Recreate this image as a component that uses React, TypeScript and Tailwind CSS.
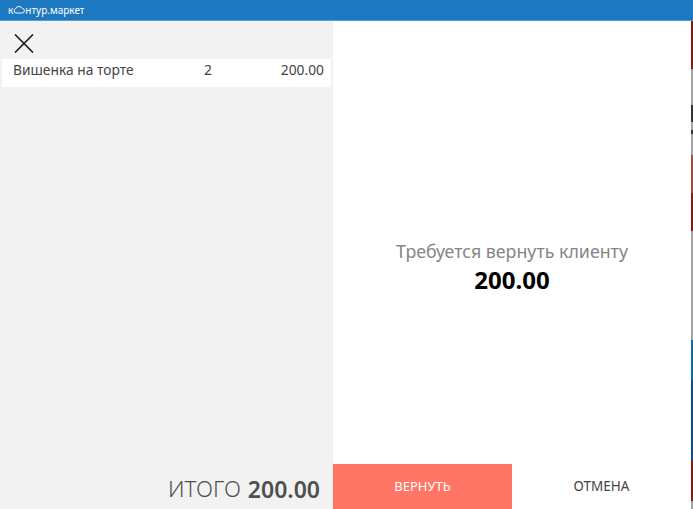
const strip = [
  { h: 'h-[48px]', c: 'bg-[#7f1d12]' },
  { h: 'h-[36px]', c: 'bg-[#a3a3a3]' },
  { h: 'h-[17px]', c: 'bg-[#333333]' },
  { h: 'h-[8px]', c: 'bg-[#a3a3a3]' },
  { h: 'h-[4px]', c: 'bg-[#333333]' },
  { h: 'h-[21px]', c: 'bg-[#a3a3a3]' },
  { h: 'h-[38px]', c: 'bg-[#a34a42]' },
  { h: 'h-[38px]', c: 'bg-[#7f1d12]' },
  { h: 'h-[109px]', c: 'bg-[#a3a3a3]' },
  { h: 'h-[40px]', c: 'bg-[#0a6c9f]' },
  { h: 'h-[80px]', c: 'bg-[#0b4f86]' },
  { h: 'h-[41px]', c: 'bg-[#7f1d12]' },
  { h: 'h-[8px]', c: 'bg-[#a3a3a3]' },
];

function CloudO() {
  return (
    <svg width="12" height="8" viewBox="0 0 14 9" fill="none" stroke="white" strokeWidth="1.1">
      <path d="M3.5 8h7a2.6 2.6 0 0 0 .4-5.2A4.2 4.2 0 0 0 3.2 2.9 2.6 2.6 0 0 0 3.5 8z" />
    </svg>
  );
}

export default function App() {
  return (
    <div className="flex h-[509px] w-[693px] flex-col overflow-hidden bg-white font-['Noto_Sans',sans-serif]">
      <div className="flex h-[21px] items-center border-b border-[#5a9dd3] bg-[#1e78c0] pl-[8px] text-[10px] text-white">
        <span>к</span>
        <CloudO />
        <span>нтур.маркет</span>
      </div>
      <div className="flex flex-1">
        <div className="flex w-[333px] flex-col bg-[#f2f2f2]">
          <div className="h-[38px] pl-[14px] pt-[13px]">
            <svg width="20" height="19" viewBox="0 0 20 19" fill="none" stroke="#1a1a1a" strokeWidth="1.6">
              <path d="M1 0.5 19 18.5M19 0.5 1 18.5" />
            </svg>
          </div>
          <div className="ml-[2px] flex h-[28px] w-[329px] bg-white pt-[1px] text-[13.8px] leading-[20px] text-[#444444]">
            <span className="ml-[11px] w-[191px]">Вишенка на торте</span>
            <span className="w-[30px]">2</span>
            <span className="w-[90px] text-right">200.00</span>
          </div>
          <div className="flex-1" />
          <div className="flex h-[45px] items-center justify-end gap-[7px] pr-[13px] pt-[5px] text-[#505050]">
            <span className="text-[22.5px] font-light">ИТОГО</span>
            <span className="text-[23px] font-semibold">200.00</span>
          </div>
        </div>
        <div className="flex w-[358px] flex-col">
          <div className="flex flex-1 flex-col items-center justify-center pt-[47px]">
            <div className="text-[17.8px] leading-[26px] text-[#858585]">Требуется вернуть клиенту</div>
            <div className="text-[24px] font-bold leading-[31px] text-black">200.00</div>
          </div>
          <div className="flex h-[45px]">
            <div className="flex w-[179px] items-center justify-center bg-[#ff7566] text-[13px] text-white">ВЕРНУТЬ</div>
            <div className="flex flex-1 items-center justify-center text-[13.5px] text-[#444444]">ОТМЕНА</div>
          </div>
        </div>
        <div className="flex w-[2px] flex-col">
          {strip.map((s, i) => (
            <div key={i} className={`${s.h} ${s.c}`} />
          ))}
        </div>
      </div>
    </div>
  );
}
